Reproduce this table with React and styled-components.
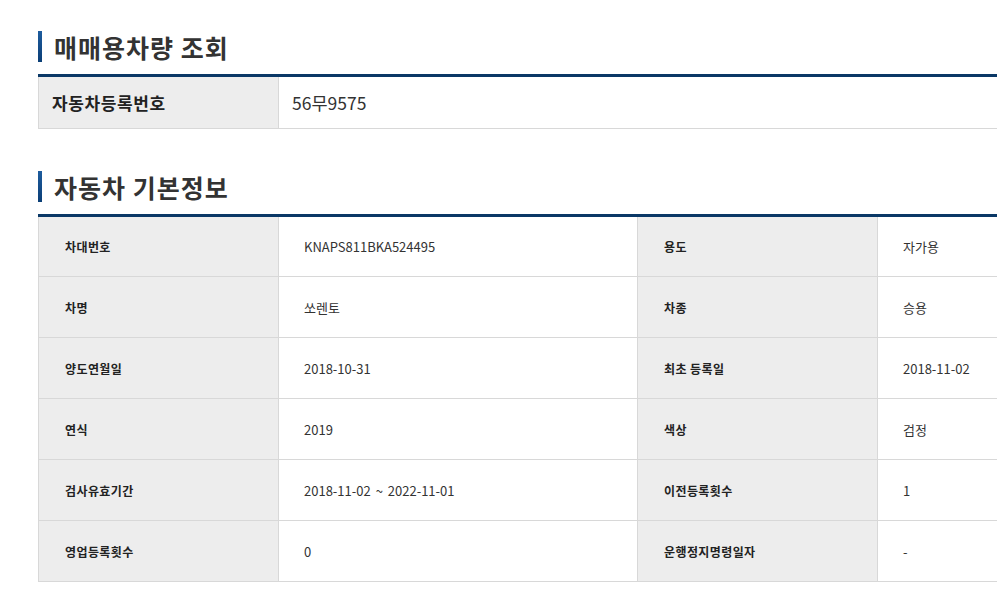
import styled, { createGlobalStyle } from 'styled-components';

const GlobalStyle = createGlobalStyle`
    html, body {
        margin: 0;
        padding: 0;
        background: #fff;
        overflow: hidden;
    }
    body {
        font-family: "Noto Sans CJK KR", "Noto Sans", sans-serif;
        color: #333;
    }
`;

const Page = styled.div`
    width: 1200px;
    padding: 31px 0 0 38px;
`;

const Section = styled.section`
    margin-bottom: 42px;
`;

const Title = styled.h2`
    display: flex;
    align-items: center;
    gap: 12px;
    margin: 0 0 12px;
    height: 31px;
    font-size: 25px;
    font-weight: 700;
    color: #333;
    letter-spacing: 1px;

    &::before {
        content: '';
        width: 4px;
        height: 31px;
        background: linear-gradient(#1d5c9e, #0b3e76);
    }
`;

const Table = styled.table`
    width: 100%;
    border-collapse: collapse;
    table-layout: fixed;
    border-top: 3px solid #0a3866;
`;

const Th = styled.th`
    width: 240px;
    box-sizing: border-box;
    height: ${(p) => (p.big ? '53px' : '61px')};
    padding: 0 0 0 ${(p) => (p.big ? '13px' : '26px')};
    background: #ededed;
    border: 1px solid #d8d8d8;
    border-top: none;
    text-align: left;
    font-size: ${(p) => (p.big ? '17px' : '12px')};
    font-weight: 700;
    color: #222;
    letter-spacing: ${(p) => (p.big ? '0.6px' : '0.4px')};
`;

const Td = styled.td`
    padding: 0 0 0 ${(p) => (p.big ? '13px' : '25px')};
    border: 1px solid #d8d8d8;
    border-top: none;
    font-size: ${(p) => (p.big ? '17.5px' : '13px')};
    color: #333;
    word-spacing: 2px;
`;

const rows = [
    ['차대번호', 'KNAPS811BKA524495', '용도', '자가용'],
    ['차명', '쏘렌토', '차종', '승용'],
    ['양도연월일', '2018-10-31', '최초 등록일', '2018-11-02'],
    ['연식', '2019', '색상', '검정'],
    ['검사유효기간', '2018-11-02 ~ 2022-11-01', '이전등록횟수', '1'],
    ['영업등록횟수', '0', '운행정지명령일자', '-'],
];

const App = () => (
    <Page>
        <GlobalStyle />
        <Section>
            <Title>매매용차량 조회</Title>
            <Table>
                <tbody>
                    <tr>
                        <Th big>자동차등록번호</Th>
                        <Td big>56무9575</Td>
                    </tr>
                </tbody>
            </Table>
        </Section>
        <Section>
            <Title>자동차 기본정보</Title>
            <Table>
                <colgroup>
                    <col style={{ width: 240 }} />
                    <col style={{ width: 359 }} />
                    <col style={{ width: 240 }} />
                    <col />
                </colgroup>
                <tbody>
                    {rows.map((r) => (
                        <tr key={r[0]}>
                            <Th>{r[0]}</Th>
                            <Td>{r[1]}</Td>
                            <Th>{r[2]}</Th>
                            <Td>{r[3]}</Td>
                        </tr>
                    ))}
                </tbody>
            </Table>
        </Section>
    </Page>
);

export default App;
